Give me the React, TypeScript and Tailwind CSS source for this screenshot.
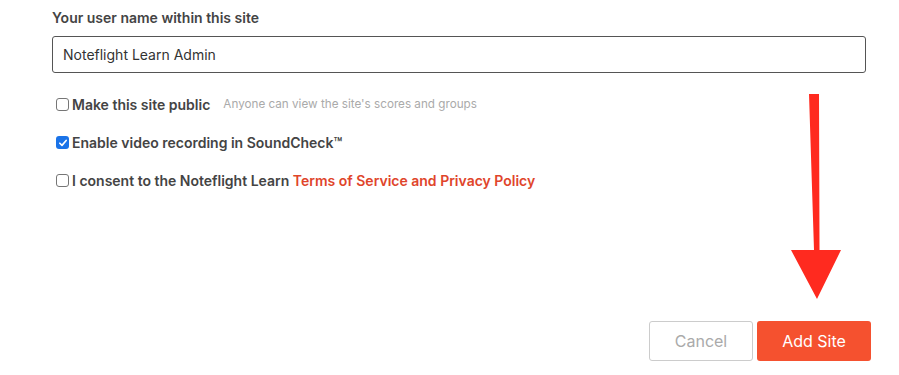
import React from 'react';

function Checkbox({ checked }: { checked?: boolean }) {
  if (checked) {
    return (
      <span className="w-[13px] h-[13px] rounded-[3px] bg-[#1a73e8] flex items-center justify-center shrink-0">
        <svg viewBox="0 0 12 12" className="w-[10px] h-[10px]">
          <path d="M2.2 6.3 L4.8 8.8 L9.8 3" fill="none" stroke="#fff" strokeWidth="2" strokeLinecap="round" strokeLinejoin="round" />
        </svg>
      </span>
    );
  }
  return <span className="w-[13px] h-[13px] rounded-[3px] border border-[#767676] bg-white shrink-0" />;
}

export default function App() {
  return (
    <div className="relative w-[899px] h-[375px] bg-white overflow-hidden" style={{ fontFamily: 'Inter, "Noto Sans", sans-serif' }}>
      <div className="pl-[52px] w-[866px] pt-[9px]">
        <label className="block text-[14px] font-semibold text-[#444] leading-[17px]">Your user name within this site</label>
        <div className="mt-[10px] h-[37px] border border-[#555] rounded-[3px] flex items-center px-[10px] text-[14px] text-[#333]">
          Noteflight Learn Admin
        </div>

        <div className="mt-[23px] pl-[4px] flex flex-col gap-[21px]">
          <div className="flex items-center gap-[3px] h-[17px]">
            <Checkbox />
            <span className="text-[14px] font-semibold text-[#444]">Make this site public</span>
            <span className="ml-[10px] text-[11.7px] text-[#aaa]">Anyone can view the site's scores and groups</span>
          </div>
          <div className="flex items-center gap-[3px] h-[17px]">
            <Checkbox checked />
            <span className="text-[14px] font-semibold text-[#444]">Enable video recording in SoundCheck™</span>
          </div>
          <div className="flex items-center gap-[3px] h-[17px]">
            <Checkbox />
            <span className="text-[14px] font-semibold text-[#444]">
              I consent to the Noteflight Learn <span className="text-[#e0452b]">Terms of Service and Privacy Policy</span>
            </span>
          </div>
        </div>
      </div>

      <div className="absolute left-0 right-[28px] top-[321px] flex justify-end gap-[4px]">
        <button className="w-[104px] h-[40px] border border-[#ccc] rounded-[3px] bg-white text-[16px] text-[#aaa]">Cancel</button>
        <button className="w-[114px] h-[40px] rounded-[3px] bg-[#f5512f] text-[16px] text-white">Add Site</button>
      </div>

      <svg className="absolute left-[788px] top-[92px]" width="56" height="210" viewBox="0 0 56 210">
        <path d="M21 2 L31 2 L31.5 158 L53 158 L29 207 L3 158 L26 158 Z" fill="#ff2a1f" />
      </svg>
    </div>
  );
}
